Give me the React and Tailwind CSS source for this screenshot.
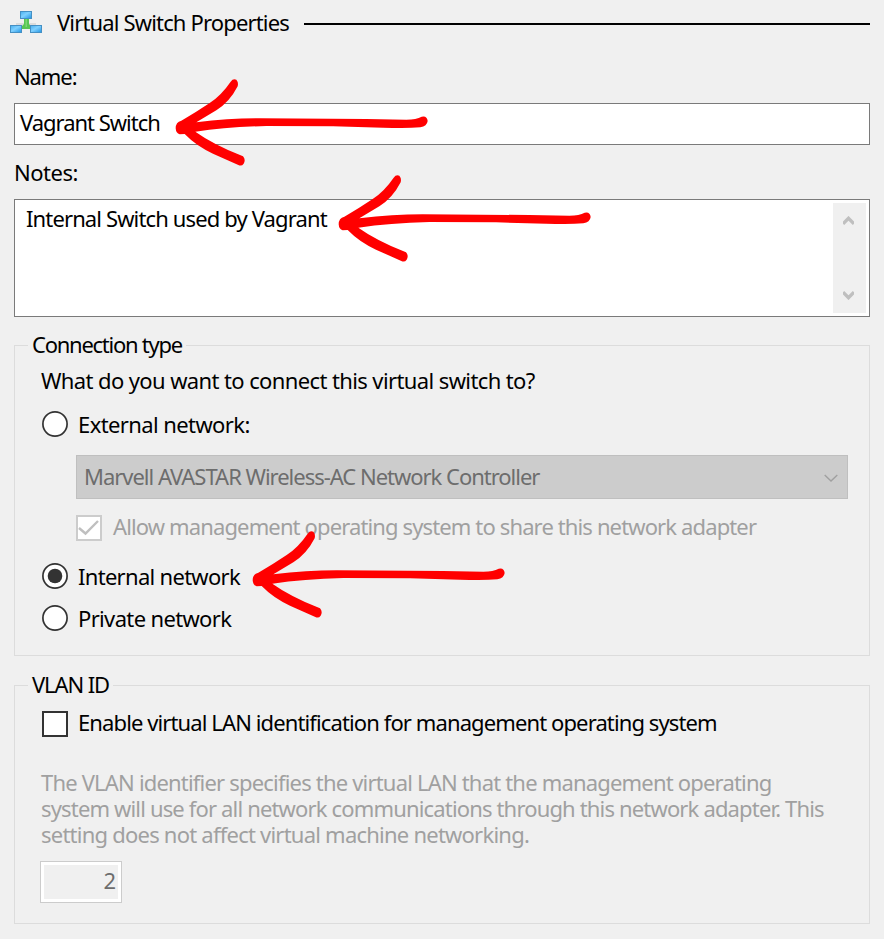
import React from "react";

function SwitchIcon() {
  return (
    <svg width="32" height="22" viewBox="0 0 32 22" className="block shrink-0">
      <defs>
        <linearGradient id="pc" x1="0" y1="0" x2="1" y2="1">
          <stop offset="0" stopColor="#45aeee" />
          <stop offset="0.45" stopColor="#7fd0ff" />
          <stop offset="1" stopColor="#1f93e2" />
        </linearGradient>
      </defs>
      <path d="M6 12h20v2h-20z" fill="#dcdcdc" />
      <path d="M14 7h5v6l2 2v3h-9v-3l2-2z" fill="#58c554" />
      <path d="M15.5 7h1.5v9h-1.5z" fill="#7bd870" />
      <g fill="url(#pc)" stroke="#4590c4" strokeWidth="1">
        <rect x="10.5" y="0.5" width="11" height="7" />
        <rect x="0.5" y="14.5" width="11" height="7" />
        <rect x="20.5" y="14.5" width="11" height="7" />
      </g>
    </svg>
  );
}

function Arrow({ className }) {
  return (
    <svg
      width="260"
      height="92"
      viewBox="520 20 780 276"
      className={"pointer-events-none absolute " + className}
    >
      <path
        fill="#ff0000"
        d="M528 174Q528 155 545 151Q590 125 630 98Q665 75 693 34Q700 24 710 28Q717 36 714 48Q690 95 650 120L590 156Q690 144 780 144L1100 146L1220 148Q1250 148 1266 139Q1282 135 1284 152Q1282 168 1262 171Q1220 175 1150 172L1000 168L800 167Q680 170 587 184Q640 222 730 258Q739 268 732 280Q726 289 716 284L640 250Q590 227 555 191L540 192Q529 189 528 174Z"
      />
    </svg>
  );
}

function Radio({ checked }) {
  return (
    <svg width="26" height="26" viewBox="0 0 26 26" className="block shrink-0">
      <circle cx="13" cy="13" r="12.1" fill="#fff" stroke="#333" strokeWidth="1.7" />
      {checked && <circle cx="13" cy="13" r="7.3" fill="#333" />}
    </svg>
  );
}

function Chevron({ d, width, stroke, sw }) {
  return (
    <svg width={width} height="10" viewBox={`0 0 ${width} 10`} className="block" fill="none">
      <path d={d} stroke={stroke} strokeWidth={sw} />
    </svg>
  );
}

export default function App() {
  return (
    <div className="relative h-[939px] w-[884px] overflow-hidden bg-[#f0f0f0] pr-[14px] pl-[14px] font-['Noto_Sans','DejaVu_Sans',sans-serif] text-[22px] leading-[26px] whitespace-nowrap text-black">
      <header className="-ml-1 flex h-[63px] items-start pt-[9px]">
        <div className="pt-[2px]">
          <SwitchIcon />
        </div>
        <h1 className="ml-[15px] w-[247px] tracking-[-0.84px]">Virtual Switch Properties</h1>
        <div className="mt-[14px] h-[2px] flex-1 bg-black" />
      </header>

      <label className="block h-[40px] tracking-[-1.1px]">Name:</label>
      <div className="h-[42px] border border-[#7a7a7a] bg-white pt-[5px] pl-[5px]">
        <span className="tracking-[-1.02px]">Vagrant Switch</span>
      </div>

      <label className="mt-[14px] block h-[40px] tracking-[-0.5px]">Notes:</label>
      <div className="flex h-[118px] justify-between border border-[#7a7a7a] bg-white p-[3px]">
        <span className="pt-[2px] pl-[8px] tracking-[-0.87px]">Internal Switch used by Vagrant</span>
        <div className="flex w-[33px] flex-col items-center justify-between bg-[#f0f0f0] py-[13px] pr-[2px]">
          <Chevron width={11} d="M0 7.8L5.5 2.3L11 7.8" stroke="#bfbfbf" sw={3.4} />
          <Chevron width={11} d="M0 2.2L5.5 7.7L11 2.2" stroke="#bfbfbf" sw={3.4} />
        </div>
      </div>

      <section className="mt-[28px] h-[311px] border border-[#dcdcdc]">
        <h2 className="-mt-[15px] ml-[13px] w-[158px] bg-[#f0f0f0] pl-[4px] tracking-[-1.25px]">Connection type</h2>
        <p className="mt-[10px] ml-[26px] tracking-[-0.61px]">What do you want to connect this virtual switch to?</p>
        <div className="mt-[18px] ml-[27px] flex">
          <Radio />
          <span className="ml-[10px] tracking-[-0.6px]">External network:</span>
        </div>
        <div className="mt-[18px] ml-[61px] flex h-[44px] w-[772px] items-start justify-between border border-[#bfbfbf] bg-[#cccccc] pt-[7px] pr-[9px] pl-[7px] text-[#6d6d6d]">
          <span className="tracking-[-1.02px]">Marvell AVASTAR Wireless-AC Network Controller</span>
          <div className="pt-[10px]">
            <Chevron width={14} d="M0.7 2L7 8L13.3 2" stroke="#a0a0a0" sw={1.4} />
          </div>
        </div>
        <div className="mt-[14px] ml-[61px] flex text-[#a0a0a0]">
          <div className="mt-[2px] h-[26px] w-[26px] border-2 border-[#cccccc] bg-white">
            <svg width="22" height="22" viewBox="0 0 22 22" fill="none">
              <path d="M1 11L7.5 16.5L20 4" stroke="#bfbfbf" strokeWidth="2.4" />
            </svg>
          </div>
          <span className="ml-[11px] tracking-[-0.87px]">
            Allow management operating system to share this network adapter
          </span>
        </div>
        <div className="mt-[22px] ml-[27px] flex">
          <Radio checked />
          <span className="ml-[10px] tracking-[-0.7px]">Internal network</span>
        </div>
        <div className="mt-[16px] ml-[27px] flex">
          <Radio />
          <span className="ml-[10px] tracking-[-0.65px]">Private network</span>
        </div>
      </section>

      <section className="mt-[29px] h-[239px] border border-[#dcdcdc]">
        <h2 className="-mt-[15px] ml-[13px] w-[85px] bg-[#f0f0f0] pl-[4px] tracking-[-1.1px]">VLAN ID</h2>
        <div className="mt-[12px] ml-[27px] flex">
          <div className="mt-[2px] h-[26px] w-[26px] border-2 border-[#333] bg-white" />
          <span className="ml-[10px] tracking-[-0.89px]">
            Enable virtual LAN identification for management operating system
          </span>
        </div>
        <div className="mt-[32px] ml-[26px] text-[#a0a0a0]">
          <p className="tracking-[-0.81px]">The VLAN identifier specifies the virtual LAN that the management operating</p>
          <p className="tracking-[-0.84px]">system will use for all network communications through this network adapter. This</p>
          <p className="tracking-[-0.77px]">setting does not affect virtual machine networking.</p>
        </div>
        <div className="mt-[14px] ml-[25px] h-[42px] w-[82px] border border-[#cccccc] bg-white p-[3px]">
          <div className="h-[34px] bg-[#f0f0f0] pt-[2px] pr-[2px] text-right text-[#6d6d6d]">2</div>
        </div>
      </section>

      <Arrow className="top-[77px] left-[173px]" />
      <Arrow className="top-[173px] left-[336px]" />
      <Arrow className="top-[529px] left-[250px]" />
    </div>
  );
}
